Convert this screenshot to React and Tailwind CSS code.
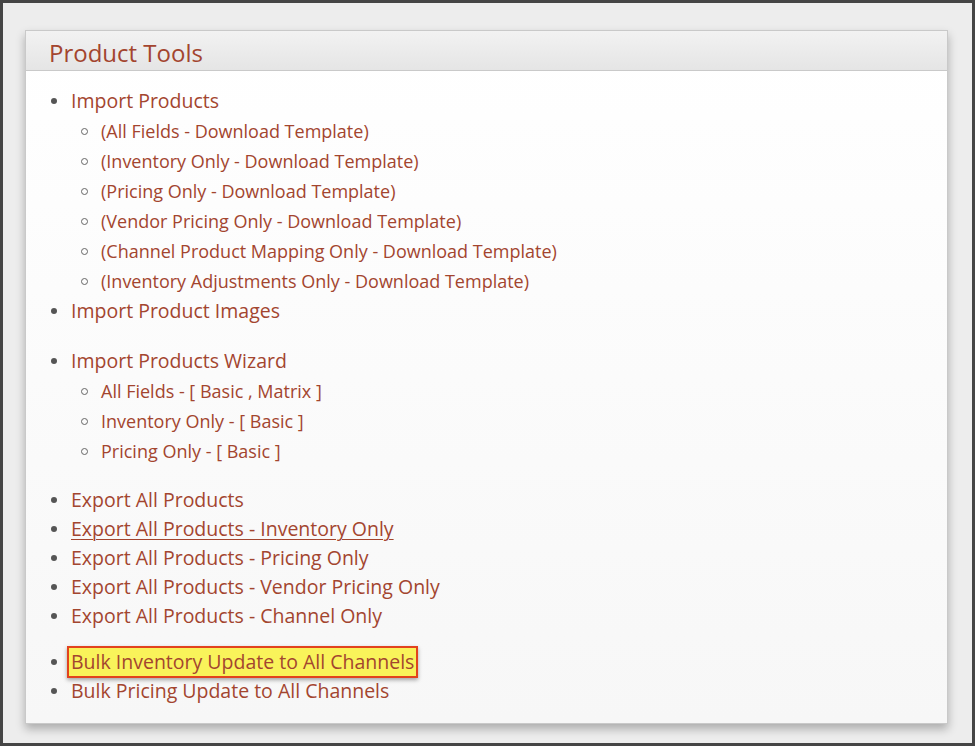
import React from 'react';

const Dot = () => <span className="inline-block w-[6px] h-[6px] rounded-full bg-[#555] mr-[14px] shrink-0" />;
const Ring = () => <span className="inline-block w-[7px] h-[7px] rounded-full border border-[#666] mr-[13px] shrink-0" />;

const Item = ({ children, underline }) => (
  <li className="flex items-center leading-[29px] text-[19.5px]">
    <Dot />
    <a className={underline ? 'underline underline-offset-[3px] decoration-1' : ''}>{children}</a>
  </li>
);

const Sub = ({ items }) => (
  <ul className="pl-[30px] pt-[1px]">
    {items.map((t) => (
      <li key={t} className="flex items-center leading-[30px] text-[18px]">
        <Ring />
        <a>{t}</a>
      </li>
    ))}
  </ul>
);

export default function App() {
  return (
    <div
      className="w-[975px] h-[746px] border-[3px] border-[#454545] bg-[#ededed] pl-[22px] pt-[27px] text-[#a3452f]"
      style={{ fontFamily: '"Open Sans", "Liberation Sans", sans-serif' }}
    >
      <div className="w-[923px] h-[694px] border border-[#c9c9c9] bg-gradient-to-b from-white to-[#f7f7f7] shadow-[0_5px_9px_rgba(0,0,0,0.28)] flex flex-col">
        <div className="h-[40px] border-b border-[#c9c9c9] bg-gradient-to-b from-[#f2f2f2] to-[#e5e5e5] pl-[23px] flex items-center">
          <h2 className="text-[24px] leading-none pt-[4px]">Product Tools</h2>
        </div>
        <ul className="pl-[25px] pt-[15px]">
          <Item>Import Products</Item>
          <Sub
            items={[
              '(All Fields - Download Template)',
              '(Inventory Only - Download Template)',
              '(Pricing Only - Download Template)',
              '(Vendor Pricing Only - Download Template)',
              '(Channel Product Mapping Only - Download Template)',
              '(Inventory Adjustments Only - Download Template)',
            ]}
          />
          <Item>Import Product Images</Item>
          <div className="h-[21px]" />
          <Item>Import Products Wizard</Item>
          <Sub items={['All Fields - [ Basic , Matrix ]', 'Inventory Only - [ Basic ]', 'Pricing Only - [ Basic ]']} />
          <div className="h-[19px]" />
          <Item>Export All Products</Item>
          <Item underline>Export All Products - Inventory Only</Item>
          <Item>Export All Products - Pricing Only</Item>
          <Item>Export All Products - Vendor Pricing Only</Item>
          <Item>Export All Products - Channel Only</Item>
          <div className="h-[18px]" />
          <li className="flex items-center text-[19.5px] leading-[28px] h-[28px]">
            <Dot />
            <a className="-ml-[4px] px-[2px] border-2 border-[#e2431d] bg-[#f9f35a] shadow-[0_2px_4px_rgba(0,0,0,0.35)]">
              Bulk Inventory Update to All Channels
            </a>
          </li>
          <Item>Bulk Pricing Update to All Channels</Item>
        </ul>
      </div>
    </div>
  );
}
